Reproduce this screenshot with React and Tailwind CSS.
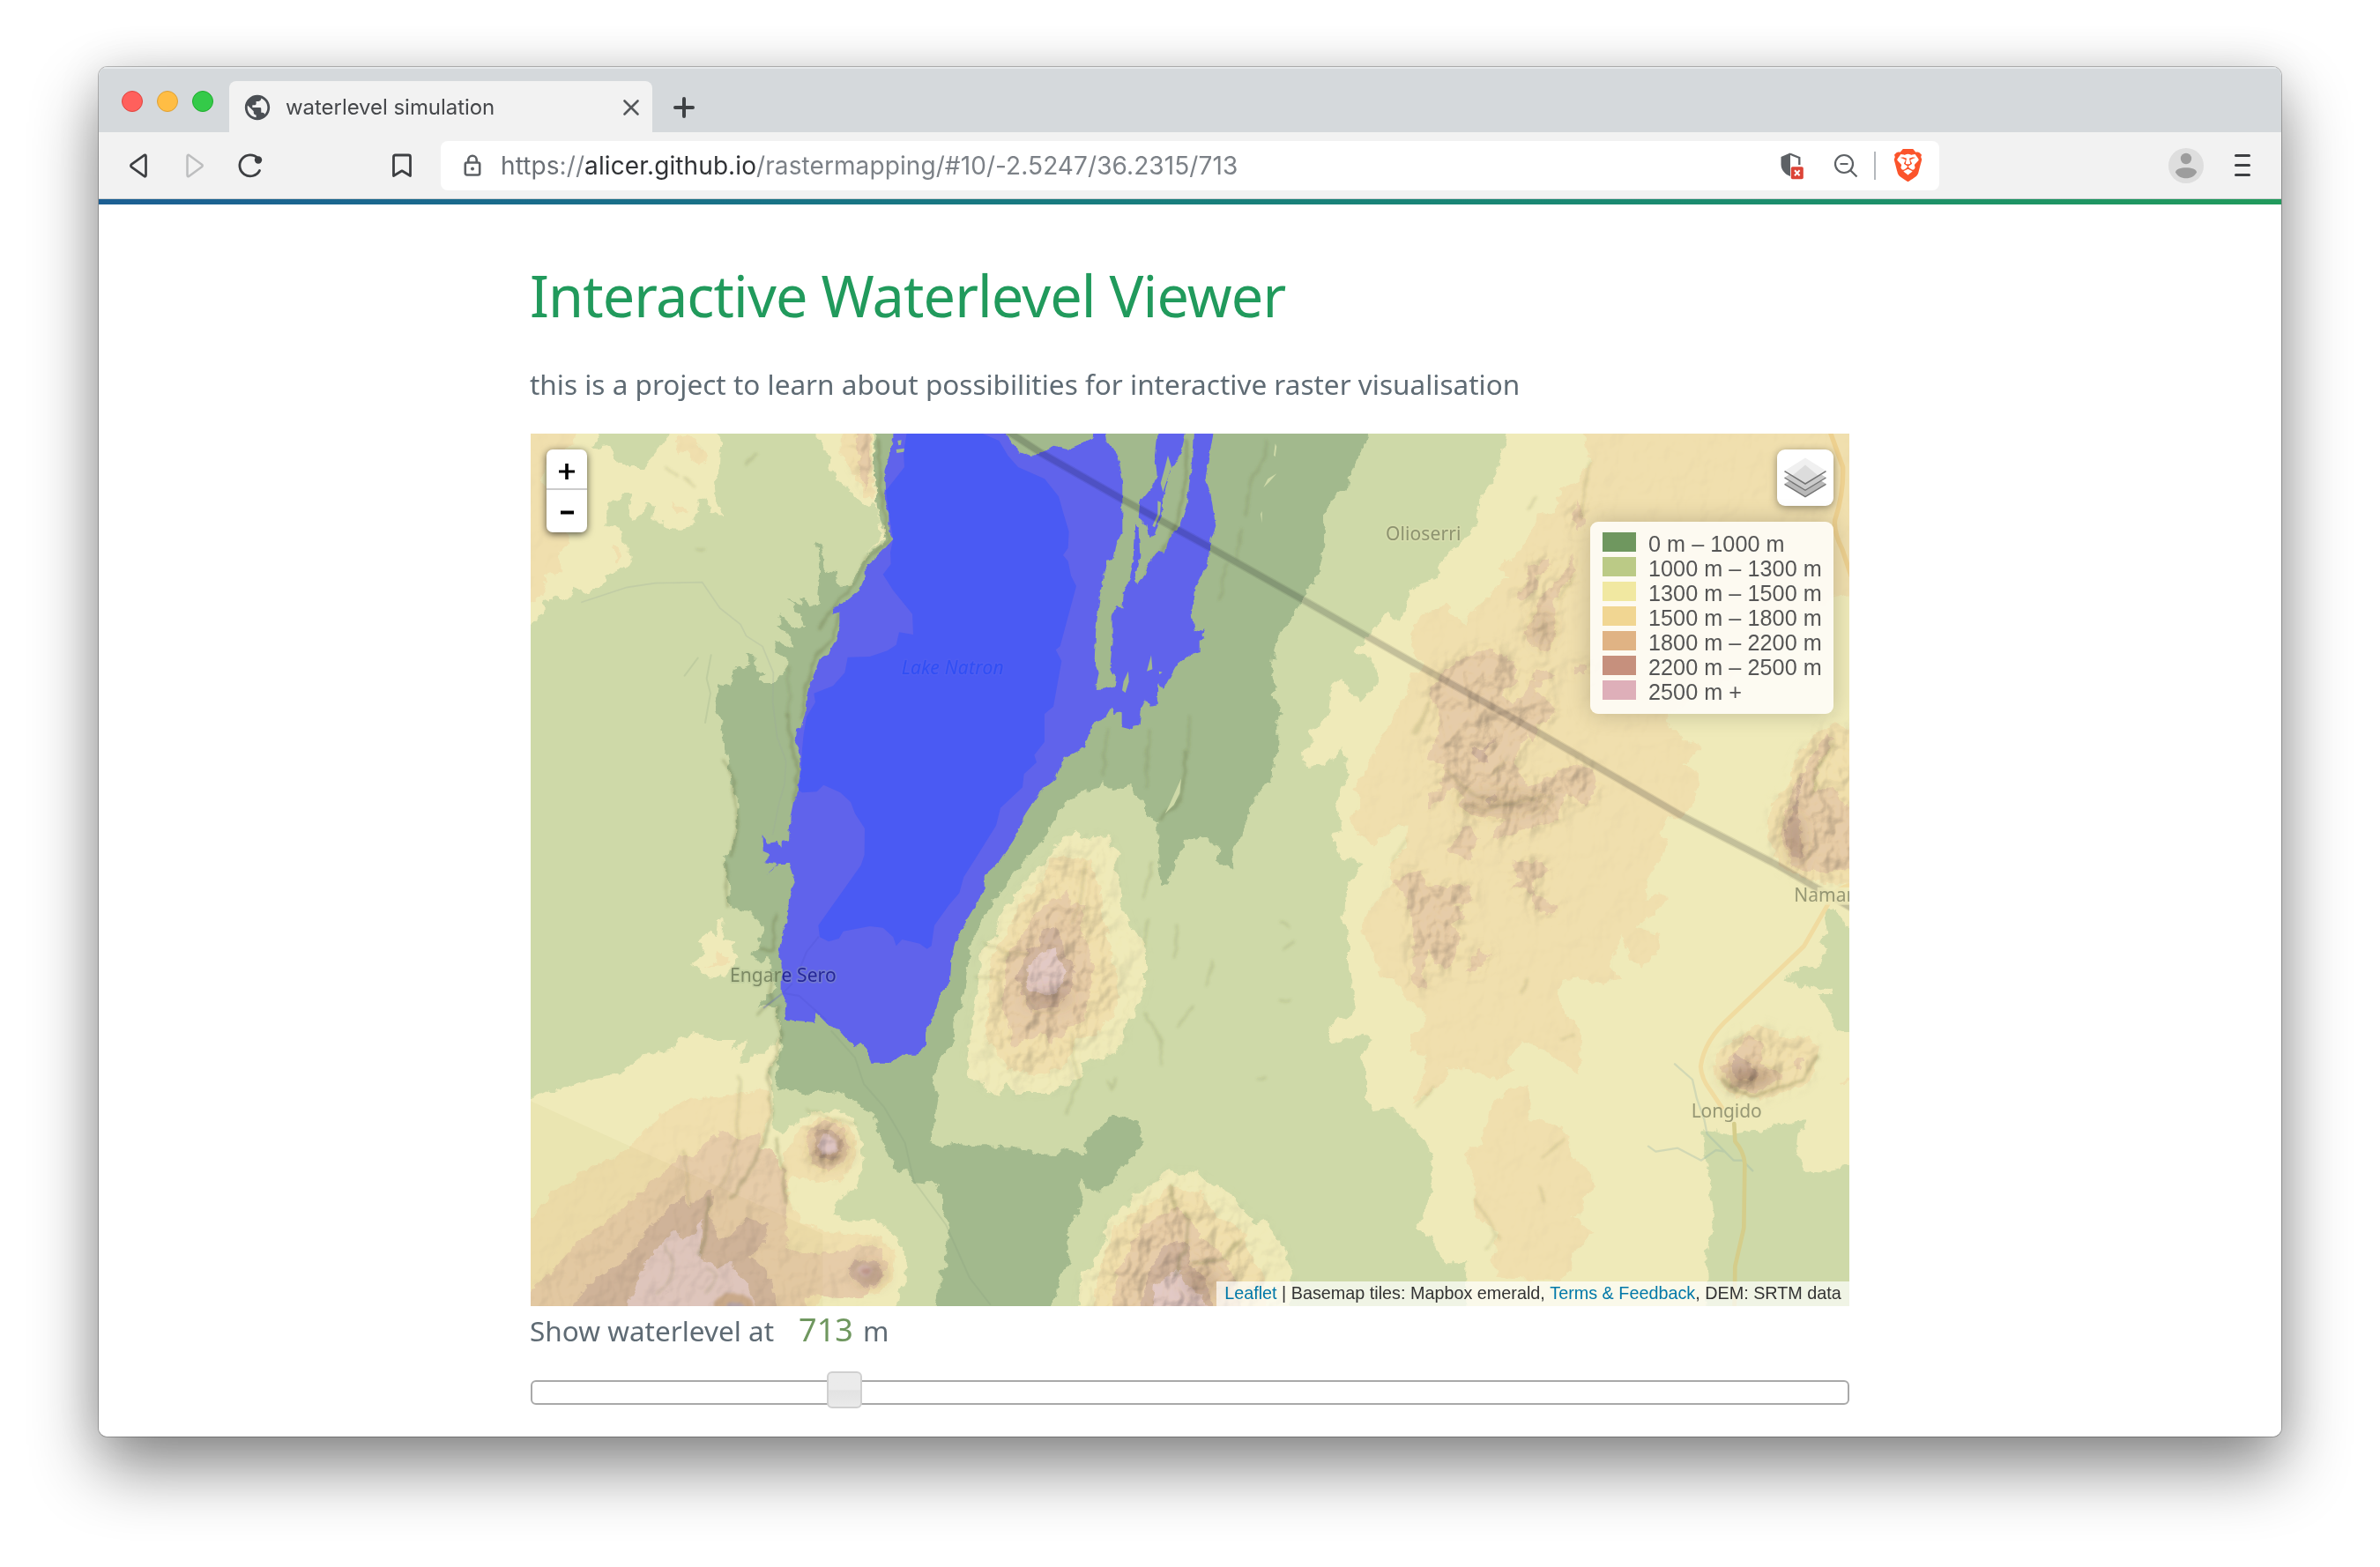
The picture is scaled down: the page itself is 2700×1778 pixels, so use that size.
import React from "react";
import { MdPublic } from "react-icons/md";
import { SiBrave } from "react-icons/si";

const DARK_GREEN = [
  "1185,36 1175,100 1180,250 1200,340 1215,400 1160,440 1130,480 1110,530 1085,560 1055,560 1050,510 1010,500 995,420 980,395 990,450 985,540 980,620 960,625 925,585 930,625 885,605 915,650 940,690 910,700 850,645 860,680 840,690 900,740 900,765 840,740 845,785 880,795 880,830 840,885 785,885 800,850 775,845 765,790 735,785 755,815 730,840 705,825 690,855 685,900 650,890 635,940 650,1010 665,1100 680,1150 695,1250 710,1300 705,1400 690,1460 655,1480 680,1540 685,1650 745,1665 790,1690 800,1740 780,1770 760,1810 790,1840 820,1820 830,1870 835,1930 780,1985 840,1990 860,2080 860,2130 845,2190 840,2250 870,2270 960,2280 1050,2275 1100,2300 1180,2370 1210,2470 1250,2540 1290,2550 1310,2580 1380,2590 1410,2620 1410,2690 1430,2720 1420,2870 1400,2880 1400,2950 1375,3040 1760,3040 1800,2960 1810,2900 1838,2860 1832,2750 1870,2690 1880,2630 1870,2600 1890,2575 1898,2610 1945,2608 1980,2590 2030,2520 2060,2500 2090,2440 2085,2390 2050,2370 2010,2355 1970,2370 1960,2390 1900,2430 1893,2490 1860,2480 1820,2470 1800,2490 1740,2488 1680,2468 1600,2466 1560,2455 1500,2455 1440,2448 1412,2472 1370,2440 1390,2300 1375,2230 1400,2160 1450,2090 1450,2040 1480,1950 1500,1800 1520,1740 1570,1640 1600,1600 1680,1495 1750,1420 1820,1290 1870,1265 1940,1240 1950,1215 1970,1250 2050,1235 2060,1265 2100,1300 2100,1340 2140,1360 2140,1500 2142,1530 2165,1575 2190,1540 2200,1490 2230,1430 2285,1400 2350,1450 2345,1490 2370,1512 2395,1510 2390,1460 2420,1420 2460,1300 2490,1240 2525,1220 2545,1100 2545,1020 2565,985 2530,930 2550,905 2525,860 2545,740 2600,650 2630,610 2690,510 2710,400 2705,310 2745,240 2790,220 2800,160 2850,60 2870,20 1185,20",
];

const YELLOW = [
  "-20,10 240,10 240,45 210,90 270,80 300,135 335,150 390,150 440,90 470,50 485,10 630,10 655,60 650,160 630,200 640,270 655,315 620,300 600,250 570,265 580,300 555,350 510,360 465,355 455,335 420,330 430,280 400,270 390,310 345,335 340,240 320,240 300,265 265,280 265,345 310,350 325,400 345,465 330,495 265,510 260,545 190,575 160,560 140,600 90,590 50,610 50,655 20,670 -20,720",
  "975,10 1010,100 1025,150 1070,210 1110,250 1140,285 1175,270 1190,300 1200,390 1150,440 1200,400 1215,400 1190,320 1180,200 1170,10",
  "-20,2315 50,2280 130,2260 310,2210 390,2155 500,2130 505,2100 560,2075 620,2100 710,2100 690,2135 740,2100 720,2180 760,2150 800,2150 840,2110 855,2080 850,2150 815,2200 830,2300 830,2400 860,2420 920,2370 980,2345 1060,2340 1110,2370 1130,2450 1140,2520 1110,2600 1060,2640 1030,2690 1080,2710 1180,2715 1240,2750 1280,2840 1280,2920 1235,3040 -20,3040",
  "555,1840 600,1810 580,1760 620,1730 640,1750 645,1690 665,1690 660,1760 705,1765 690,1810 710,1825 670,1890 610,1885",
  "1755,1500 1790,1440 1870,1390 1880,1410 1970,1405 1980,1450 2010,1460 1995,1500 2015,1580 2020,1650 2050,1720 2085,1750 2100,1810 2100,1900 2080,1980 2020,2060 2020,2120 1970,2155 1880,2180 1875,2230 1770,2280 1660,2280 1630,2250 1600,2285 1555,2270 1550,2240 1500,2230 1488,2170 1510,2060 1530,1900 1540,1790 1590,1740 1600,1690 1660,1600 1740,1510",
  "1870,3040 1880,2900 1920,2870 1960,2780 1970,2720 2040,2660 2060,2620 2120,2600 2185,2540 2200,2560 2260,2550 2340,2600 2400,2630 2420,2670 2480,2730 2510,2715 2540,2770 2570,2810 2590,2880 2600,2950 2580,3040",
  "3330,10 3315,90 3290,180 3235,260 3225,340 3190,390 3110,460 3090,520 3010,570 2990,565 2995,610 2980,640 2960,680 2920,650 2860,720 2810,780 2870,800 2890,860 2870,910 2830,950 2790,910 2770,870 2730,900 2720,1000 2660,1050 2660,1100 2630,1120 2640,1170 2710,1165 2770,1100 2775,1170 2790,1190 2750,1280 2770,1390 2730,1400 2760,1480 2840,1500 2780,1570 2770,1700 2790,1750 2790,1860 2810,1930 2810,2010 2750,2030 2725,2060 2730,2110 2780,2100 2840,2080 2870,2100 2830,2160 2850,2220 2850,2300 2880,2340 2940,2330 2990,2380 3000,2400 3050,2440 3080,2530 3065,2640 3050,2700 3020,2740 3070,2770 3100,2830 3120,2860 3190,2860 3190,3040 4000,3040 4010,2900 4005,2820 4035,2700 4020,2600 4000,2500 4000,2400 4070,2420 4200,2410 4260,2385 4350,2380 4320,2420 4310,2480 4345,2550 4430,2540 4520,2520 4520,2078 4450,2070 4430,2010 4390,1950 4440,1950 4440,1925 4400,1925 4370,1910 4330,1920 4275,1890 4330,1850 4390,1855 4420,1790 4390,1765 4420,1740 4410,1650 4440,1650 4520,1750 4520,10",
];

const TAN = [
  "-20,10 185,10 130,80 60,130 40,200 100,300 140,400 100,440 115,510 60,520 40,590 -20,610",
  "500,50 540,40 600,90 610,130 570,140 530,90 505,100",
  "285,420 305,420 315,460 300,480",
  "480,270 510,280 545,300 500,310",
  "1062,10 1060,110 1100,170 1150,250 1172,260 1165,10",
  "-20,2730 80,2620 200,2540 330,2480 400,2400 500,2320 550,2300 700,2290 760,2270 815,2270 820,2340 800,2420 790,2490 830,2480 860,2540 870,2490 900,2440 930,2390 980,2365 1060,2370 1110,2430 1110,2520 1060,2580 960,2580 900,2560 880,2590 890,2660 930,2720 1010,2750 1100,2760 1200,2770 1250,2830 1240,2910 1190,2960 1040,2970 1000,2960 950,3040 -20,3040",
  "1780,1480 1740,1560 1670,1640 1610,1760 1570,1830 1565,1980 1550,2090 1600,2150 1630,2200 1740,2215 1800,2200 1850,2150 1860,2090 1930,2080 1980,2020 2010,1960 2000,1880 1980,1790 1960,1700 1950,1600 1910,1480",
  "1910,3040 1940,2900 1990,2740 2060,2680 2140,2640 2180,2590 2220,2610 2290,2620 2340,2700 2430,2740 2450,2820 2500,2900 2520,3040",
  "3575,10 3615,130 3580,170 3570,210 3510,220 3490,310 3430,310 3410,370 3370,440 3300,490 3330,520 3270,590 3200,640 3190,690 3120,620 3040,650 3000,720 3010,780 3050,830 3000,860 2990,900 2960,960 2930,1020 2880,1100 2850,1180 2810,1240 2830,1290 2790,1350 2830,1400 2870,1440 2960,1370 2990,1370 2980,1450 2930,1500 2940,1560 2860,1650 2830,1730 2870,1790 2900,1890 2950,1890 2990,1960 3040,2000 3050,2060 3000,2080 3000,2140 3060,2150 3040,2230 3010,2320 3090,2260 3135,2220 3120,2200 3200,2200 3290,2240 3350,2200 3330,2170 3380,2100 3460,2140 3575,2215 3580,2060 3520,2000 3500,1930 3550,1880 3650,1910 3715,1890 3680,1850 3700,1800 3720,1740 3750,1830 3790,1850 3850,1790 3840,1740 3770,1710 3830,1670 3870,1620 3850,1600 3800,1620 3810,1560 3840,1500 3880,1440 3850,1400 3880,1340 3920,1350 3970,1280 3980,1200 3930,1160 3990,1100 3940,1080 3900,1040 3870,1020 3900,980 4200,800 4440,590 4520,585 4520,10",
  "3290,2310 3340,2260 3400,2260 3410,2320 3400,2370 3480,2380 3540,2420 3550,2500 3620,2550 3630,2600 3580,2640 3590,2690 3550,2700 3620,2760 3590,2800 3550,2830 3550,2880 3500,2920 3300,2910 3280,2850 3300,2750 3220,2700 3215,2580 3190,2470 3240,2460 3260,2380",
  "4520,1050 4440,1020 4380,1060 4320,1130 4280,1230 4230,1300 4215,1400 4250,1500 4330,1550 4400,1565 4520,1570",
  "4030,2200 4050,2140 4120,2080 4180,2050 4250,2070 4290,2100 4350,2090 4390,2120 4380,2200 4340,2250 4200,2300 4100,2290 4040,2230",
  "4460,2250 4520,2200 4520,2220 4480,2250",
  "640,1790 655,1800 680,1840 660,1850 590,1850 640,1835",
];

const SALMON = [
  "1108,10 1115,90 1130,170 1150,230 1160,180 1155,10",
  "-20,2985 100,2860 160,2790 280,2710 400,2600 480,2540 520,2490 550,2500 600,2450 650,2410 720,2440 780,2420 790,2470 830,2480 870,2550 880,2650 880,2810 960,2830 1080,2820 1120,2800 1180,2800 1220,2860 1200,2920 1130,2980 950,2970 950,3040 -20,3040",
  "940,2455 960,2400 1010,2375 1070,2400 1095,2460 1070,2520 1020,2550 970,2520",
  "1830,1590 1800,1620 1740,1650 1650,1780 1620,1820 1615,2000 1640,2070 1650,2130 1690,2100 1740,2080 1780,2110 1830,2060 1890,2040 1900,1970 1920,1900 1910,1800 1880,1720 1890,1640 1870,1630 1850,1640",
  "1980,3040 2000,2900 2050,2800 2090,2730 2200,2670 2240,2700 2290,2770 2350,2820 2390,2870 2400,2920 2430,3040",
  "3270,770 3350,810 3360,870 3310,930 3350,960 3400,900 3430,840 3500,850 3420,910 3490,960 3490,990 3430,1030 3420,1080 3400,1060 3350,1150 3400,1240 3480,1200 3550,1160 3620,1180 3630,1240 3600,1310 3530,1260 3500,1360 3420,1370 3300,1420 3280,1390 3330,1350 3220,1340 3160,1300 3180,1270 3150,1240 3060,1310 3060,1260 3100,1250 3120,1160 3050,1140 3090,1080 3100,980 3060,920 3100,860 3180,800",
  "3400,490 3470,460 3480,490 3430,520 3430,570 3380,610 3360,590 3400,540",
  "3560,450 3560,510 3490,600 3490,700 3470,780 3400,750 3390,710 3430,640 3440,590 3500,540",
  "3570,260 3595,330 3570,370 3550,320",
  "3190,1370 3230,1420 3200,1480 3130,1460",
  "3000,1530 3030,1520 3060,1580 3200,1570 3210,1630 3150,1640 3190,1680 3140,1700 3170,1750 3150,1830 3110,1870 3060,1790 3040,1860 3050,1930 3010,1910 3010,1700 2980,1600 2940,1560",
  "3230,1790 3270,1810 3240,1850 3190,1870",
  "3350,1490 3430,1490 3470,1520 3420,1560 3430,1610 3500,1650 3480,1670 3420,1660 3420,1600 3340,1580 3380,1550 3350,1530",
  "3560,830 3600,820 3600,855 3560,855",
  "4420,1050 4440,1080 4400,1140 4370,1250 4430,1240 4480,1300 4520,1330 4520,1510 4400,1530 4300,1510 4260,1400 4280,1300 4340,1170",
  "4050,2190 4100,2150 4150,2080 4190,2100 4200,2180 4270,2230 4180,2280 4100,2260",
  "4310,2160 4335,2160 4330,2200 4305,2200",
];

const BROWN = [
  "120,3040 200,2930 300,2870 380,2790 400,2740 440,2720 460,2680 530,2630 550,2680 570,2640 630,2610 620,2700 650,2790 740,2710 810,2730 800,2790 750,2830 790,2870 830,2930 855,3040",
  "970,2450 985,2410 1030,2400 1060,2430 1070,2460 1050,2500 1015,2510 980,2490",
  "1085,2880 1110,2850 1160,2855 1185,2850 1210,2890 1190,2920 1150,2945 1105,2920",
  "1750,1720 1780,1710 1810,1740 1820,1810 1860,1860 1850,1930 1790,1985 1710,2000 1680,1950 1660,1880 1690,1840 1700,1790 1740,1770",
  "2070,3040 2120,2870 2160,2800 2240,2780 2245,2860 2300,2910 2340,3040",
  "4340,1180 4320,1280 4330,1400 4340,1480 4300,1480 4270,1400 4300,1330",
  "4090,2190 4110,2150 4160,2180 4180,2220 4160,2245 4100,2220",
  "3205,1110 3240,1110 3290,1070 3250,1120 3270,1150 3230,1160",
  "3250,1290 3290,1265 3300,1280 3270,1300",
];

const PINK = [
  "320,3040 370,2920 400,2860 440,2810 500,2745 520,2780 560,2760 595,2710 580,2830 600,2860 650,2875 690,2850 700,2880 740,2920 785,3040",
  "990,2435 1010,2422 1040,2450 1052,2475 1030,2492 1000,2485 985,2460",
  "1700,1850 1740,1800 1790,1795 1830,1870 1810,1920 1780,1950 1740,1945 1700,1930 1690,1890",
  "2120,3040 2130,2930 2210,2880 2230,2930 2290,2970 2320,3040",
];

const WATER = [
  "1240,10 1240,50 1230,100 1210,160 1215,220 1210,260 1225,310 1225,370 1240,395 1200,440 1145,490 1145,520 1125,570 1075,610 1035,630 1035,650 1060,640 1060,680 1045,740 1020,785 990,800 965,870 945,930 940,990 925,1035 910,1040 905,1085 920,1110 925,1170 915,1250 900,1290 890,1340 885,1420 860,1425 860,1445 845,1425 815,1430 797,1405 797,1460 820,1470 800,1495 845,1500 830,1520 805,1540 850,1500 885,1500 905,1560 885,1620 880,1700 865,1730 850,1800 860,1850 860,1940 875,1970 870,2030 970,2040 980,2010 1025,2055 1060,2070 1110,2125 1130,2110 1150,2130 1165,2180 1225,2180 1270,2150 1320,2150 1350,2120 1350,2075 1385,2000 1400,1940 1430,1910 1435,1830 1450,1770 1500,1675 1550,1590 1550,1540 1600,1495 1650,1420 1690,1330 1740,1255 1790,1215 1820,1140 1890,1105 1920,1020 1960,1005 1983,965 1990,990 2018,985 2018,1035 2055,1045 2078,1025 2085,970 2100,940 2115,965 2138,960 2140,890 2160,905 2200,830 2250,790 2285,780 2285,740 2305,735 2290,720 2300,700 2265,715 2255,650 2265,570 2310,480 2320,400 2338,350 2320,240 2303,190 2315,110 2335,10 2263,10 2255,150 2240,270 2215,350 2180,390 2165,440 2140,435 2110,480 2090,530 2070,550 2060,535 2080,450 2075,365 2062,340 2055,480 2045,530 2025,570 2020,635 2000,620 1985,660 1985,740 1978,840 1998,860 1995,895 1955,905 1928,905 1940,850 1925,810 1930,700 1945,580 1965,470 1990,465 2000,410 2020,370 2020,190 2005,110 1965,60 1958,10 1925,10 1922,50 1900,60 1830,90 1790,80 1710,115 1670,100 1600,10",
  "2140,10 2240,10 2220,100 2185,160 2160,250 2155,310 2130,380 2110,390 2100,345 2075,320 2080,270 2120,220 2138,180 2130,110",
];

const ISLANDS = [
  "2175,110 2187,150 2158,235 2150,205 2165,150",
  "2140,265 2151,270 2148,310 2130,355 2122,350 2140,310",
  "2040,845 2042,880 2030,918 2019,910 2024,880",
  "2118,790 2122,838 2103,845",
  "2144,845 2156,848 2146,856",
  "1255,60 1268,58 1266,74 1258,76",
  "1250,90 1278,86 1276,98 1252,102",
];

const LAKE = [
  "1290,10 1275,100 1278,150 1215,230 1225,310 1240,395 1230,440 1232,480 1205,515 1240,570 1305,650 1308,720 1260,712 1250,755 1220,775 1160,795 1085,797 1075,850 1035,895 970,920 975,950 945,1000 935,1060 930,1110 927,1170 918,1250 930,1258 980,1255 1003,1232 1060,1258 1095,1290 1110,1330 1143,1380 1142,1470 1130,1505 985,1710 990,1750 1020,1765 1055,1755 1070,1730 1160,1713 1205,1718 1240,1750 1250,1780 1270,1758 1330,1772 1355,1790 1370,1780 1380,1710 1430,1640 1465,1600 1480,1545 1515,1490 1590,1370 1605,1310 1680,1240 1685,1195 1728,1155 1720,1130 1755,1085 1755,990 1785,965 1813,810 1793,772 1808,760 1863,555 1845,520 1835,470 1818,450 1835,425 1838,370 1820,310 1803,250 1755,190 1665,150 1630,110 1600,60 1530,30 1530,10",
];

const RIDGES = [
  "M1190 60 L1195 200 L1215 330 L1225 400 L1150 460 L1115 540 L1040 620 L990 700",
  "M1055 650 L1035 730 L980 800 L945 890 L925 1000",
  "M885 1000 L890 1080 L915 1180 L905 1290",
  "M665 1150 L690 1200 L705 1300 L710 1380 L690 1470",
  "M670 1500 L680 1640 M835 1680 L830 1790 L790 1790",
  "M2240 60 L2232 220 L2205 340 L2180 400 L2150 440 L2080 550 L2050 590",
  "M2235 1120 L2230 1220 L2205 1300 L2150 1350",
  "M820 1900 L825 1960 L780 2010 M845 1990 L855 2080 L845 2150 L812 2200 L825 2350 L800 2450 L760 2530 L690 2640",
  "M840 2440 L870 2550 L870 2650 M610 2640 L600 2780 L580 2830",
  "M2240 2690 L2240 2800 L2200 2900 M2185 2590 L2200 2680 M2260 2860 L2350 2850 L2420 2780",
  "M4440 1100 L4380 1180 L4370 1260 M4060 2240 L4160 2290 L4330 2240 L4385 2160",
];

const FAINT_RIDGES = [
  "M2505 60 L2505 120 L2455 200 L2440 320 M2420 360 L2410 460 M2380 480 L2350 600",
  "M2248 1000 L2245 1120 M1970 1040 L1955 1200 M2110 1050 L2100 1240 M1885 850 L1888 1000",
  "M715 2220 L715 2330 L700 2480 L650 2600 M530 2480 L545 2670 M885 830 L885 1000",
  "M2120 1500 L2090 1620 M2105 1690 L2095 1780 M1895 1500 L1880 1630 L1850 1700 M1850 2080 L1850 2170 L1875 2230 L1830 2350",
  "M2100 2010 L2155 2110 L2150 2180 M2325 1830 L2310 1920 M2260 1980 L2210 2060 M2205 1710 L2200 1820",
  "M3610 130 L3590 250 L3580 320 M3430 260 L3400 290 M3560 520 L3500 600 M3060 980 L3020 1060",
  "M3120 1180 L3180 1240 L3250 1280 L3330 1290 M3180 1300 L3260 1320 L3360 1290 L3480 1270",
  "M3500 1270 L3420 1340 M2990 1420 L2940 1490 M3060 960 L3010 1060 M3280 1200 L3330 1130",
  "M3400 1890 L3380 1940 M3560 2080 L3510 2095 M3520 2440 L3450 2500 M3080 2260 L3020 2330",
  "M3220 2640 L3270 2720 L3300 2780 M3440 2600 L3455 2650 M3290 2760 L3260 2810",
  "M1550 1770 L1620 1800 L1700 1810 M1520 1880 L1600 1890 M1690 1850 L1680 1930 L1720 1990",
  "M950 2340 L1110 2390 M610 2880 Q660 2900 600 2960 M470 2800 Q520 2900 440 2960",
  "M470 150 L500 180 M530 190 L560 210 M780 100 L740 140 M580 430 L600 425 M1970 2240 L1985 2265 L2000 2235",
  "M2480 2230 L2500 2225 M2590 1960 L2560 1965 M2560 1700 L2590 1715 M2600 1760 L2570 1785",
];

function Polys({ shapes, fill, filter }) {
  return (
    <g fill={fill} filter={filter}>
      {shapes.map((points, i) => (
        <polygon key={i} points={points} />
      ))}
    </g>
  );
}

function PlaceName({ x, y, width, children, fill = "#5d6247", opacity = 0.6, halo = "#ece9b8", italic }) {
  return (
    <text
      x={x}
      y={y}
      textLength={width}
      fontFamily='"Noto Sans", "Open Sans", sans-serif'
      fontSize="63"
      fontStyle={italic ? "italic" : "normal"}
      fill={fill}
      fillOpacity={opacity}
      stroke={halo}
      strokeOpacity="0.25"
      strokeWidth="10"
      strokeLinejoin="round"
      paintOrder="stroke"
    >
      {children}
    </text>
  );
}

function TerrainMap() {
  return (
    <svg viewBox="6 36 4488 2970" className="block h-full w-full" aria-label="Elevation map">
      <defs>
        <filter id="rough" filterUnits="userSpaceOnUse" x="-30" y="0" width="4560" height="3050">
          <feTurbulence type="fractalNoise" baseFrequency="0.03" numOctaves="3" seed="4" />
          <feDisplacementMap in="SourceGraphic" scale="34" xChannelSelector="R" yChannelSelector="G" />
        </filter>
        <filter id="shore" filterUnits="userSpaceOnUse" x="-30" y="0" width="4560" height="3050">
          <feTurbulence type="fractalNoise" baseFrequency="0.04" numOctaves="2" seed="9" />
          <feDisplacementMap in="SourceGraphic" scale="16" xChannelSelector="R" yChannelSelector="G" />
        </filter>
        <filter id="soft" filterUnits="userSpaceOnUse" x="-30" y="0" width="4560" height="3050">
          <feTurbulence type="fractalNoise" baseFrequency="0.02" numOctaves="2" seed="7" result="noise" />
          <feDisplacementMap in="SourceGraphic" in2="noise" scale="26" xChannelSelector="R" yChannelSelector="G" />
          <feGaussianBlur stdDeviation="4" />
        </filter>
        <filter id="softWide" filterUnits="userSpaceOnUse" x="-30" y="0" width="4560" height="3050">
          <feGaussianBlur stdDeviation="22" />
        </filter>
        <filter id="relief" filterUnits="userSpaceOnUse" x="-30" y="0" width="4560" height="3050" colorInterpolationFilters="sRGB">
          <feTurbulence type="fractalNoise" baseFrequency="0.012 0.01" numOctaves="3" seed="12" />
          <feColorMatrix type="matrix" values="0 0 0 0 0  0 0 0 0 0  0 0 0 0 0  1 0 0 0 0" />
          <feDiffuseLighting surfaceScale="34" diffuseConstant="1.24" lightingColor="#fff6dc">
            <feDistantLight azimuth="225" elevation="55" />
          </feDiffuseLighting>
        </filter>
        <mask id="hills" maskUnits="userSpaceOnUse" x="0" y="0" width="4540" height="3040">
          <g filter="url(#softWide)">
            <Polys shapes={TAN} fill="#101010" />
            <Polys shapes={YELLOW.slice(4, 6)} fill="#303030" />
            <Polys shapes={[TAN[10], TAN[11], TAN[6], TAN[7]]} fill="#686868" />
            <Polys shapes={SALMON} fill="#a0a0a0" />
            <Polys shapes={[SALMON[1]]} fill="#303030" />
          </g>
        </mask>
      </defs>

      <rect x="6" y="36" width="4488" height="2970" fill="#ced9a8" />
      <Polys shapes={DARK_GREEN} fill="#a2b98d" filter="url(#rough)" />
      <Polys shapes={YELLOW} fill="#efeab9" filter="url(#rough)" />
      <Polys shapes={TAN} fill="#f0dfae" filter="url(#rough)" />
      <Polys shapes={SALMON} fill="#e6cca9" filter="url(#rough)" />
      <Polys shapes={BROWN} fill="#d2b6a0" filter="url(#rough)" />
      <Polys shapes={PINK} fill="#e2c9c5" filter="url(#rough)" />
      <ellipse cx="695" cy="3000" rx="68" ry="38" fill="#ccab90" filter="url(#soft)" />
      <ellipse cx="705" cy="3006" rx="34" ry="15" fill="#b6a5ad" filter="url(#soft)" />
      <ellipse cx="1146" cy="2888" rx="24" ry="14" fill="#cda59b" stroke="#dcc0bc" strokeWidth="8" filter="url(#soft)" />
      <polygon points="6,2308 1000,2760 1000,3006 6,3006" fill="#9a8a30" fillOpacity="0.05" />
      <g filter="url(#softWide)" fill="#6d5030">
        <ellipse cx="1025" cy="2475" rx="62" ry="50" fillOpacity="0.28" />
        <ellipse cx="1165" cy="2900" rx="50" ry="35" fillOpacity="0.25" />
        <ellipse cx="1770" cy="1960" rx="80" ry="30" fillOpacity="0.2" />
        <ellipse cx="2290" cy="2930" rx="60" ry="50" fillOpacity="0.2" />
        <ellipse cx="4150" cy="2230" rx="90" ry="30" fillOpacity="0.35" />
        <ellipse cx="4310" cy="1420" rx="30" ry="90" fillOpacity="0.25" />
        <ellipse cx="3300" cy="1290" rx="150" ry="40" fillOpacity="0.12" />
        <ellipse cx="3450" cy="700" rx="40" ry="60" fillOpacity="0.12" />
      </g>
      <ellipse cx="1018" cy="2455" rx="30" ry="30" fill="#ddc4c4" filter="url(#soft)" />

      <g mask="url(#hills)" className="mix-blend-multiply" opacity="0.38">
        <rect x="6" y="36" width="4488" height="2970" filter="url(#relief)" />
      </g>

      <g fill="none" stroke="#5b6433" strokeOpacity="0.26" strokeWidth="12" strokeLinecap="round" strokeLinejoin="round" filter="url(#soft)">
        {RIDGES.map((d) => (
          <path key={d} d={d} />
        ))}
      </g>
      <g fill="none" stroke="#5b6433" strokeOpacity="0.16" strokeWidth="9" strokeLinecap="round" strokeLinejoin="round" filter="url(#soft)">
        {FAINT_RIDGES.map((d) => (
          <path key={d} d={d} />
        ))}
      </g>

      <Polys shapes={["2180,1300 2220,1210 2215,1260 2195,1300 2165,1330", "2500,220 2515,190 2545,172 2520,200", "2535,110 2540,70 2545,80 2540,115", "2490,310 2495,300 2495,340"]} fill="#ced9a8" />

      <Polys shapes={WATER} fill="#6064eb" filter="url(#shore)" />
      <Polys shapes={LAKE} fill="#4a5af3" />
      <Polys shapes={ISLANDS} fill="#a2b98d" />

      <g fill="none" strokeLinecap="round" strokeLinejoin="round">
        <path d="M180 610 L330 560 L430 545 L590 542 L650 630 L720 685 L740 725 L795 760 L832 850 L830 950 L845 1070 L875 1150 L870 1230 L850 1300 L830 1400" stroke="#9aa9a0" strokeOpacity="0.24" strokeWidth="5" />
        <path d="M620 790 L605 870 L618 920 L600 1020 M530 860 L575 800 M1030 2070 L1110 2160 L1140 2250 L1210 2330 L1280 2450 L1310 2580 L1420 2730 L1500 2910 L1570 3000" stroke="#7f9478" strokeOpacity="0.18" strokeWidth="6" />
        <path d="M985 1750 L945 1800 L925 1850 M895 1910 L865 1940 L800 1990 M865 1940 L920 1950 L1010 2030" stroke="#4a50d0" strokeOpacity="0.25" strokeWidth="6" />
        <path d="M3900 2182 L3960 2235 L3975 2300 L4000 2370 L4010 2420 L4100 2510 L4130 2510 L4165 2545 M3810 2462 L3835 2480 L3910 2468 L3990 2510 L4040 2475 L4070 2480" stroke="#8fb0a8" strokeOpacity="0.3" strokeWidth="7" />
        <path d="M4425 20 Q4450 90 4472 150 Q4475 240 4445 330 Q4440 370 4470 430 L4500 520" stroke="#edd08f" strokeWidth="16" />
        <path d="M4520 1570 Q4440 1575 4420 1640 L4340 1780 L4090 2020 Q4000 2100 3988 2190 Q3990 2230 4020 2270 L4060 2330" stroke="#f0dba0" strokeWidth="15" />
        <path d="M4102 2385 L4105 2445 Q4135 2480 4138 2520 L4135 2740 L4105 2870 L4103 3010" stroke="#d5cd8a" strokeWidth="14" />
        <path d="M1610 15 L1740 100 L2020 260 L2330 430 L2640 605 L3000 810 L3430 1050 L3920 1335 L4240 1500 L4500 1650" stroke="#00000e" strokeOpacity="0.08" strokeWidth="28" />
        <path d="M1610 15 L1740 100 L2020 260 L2330 430 L2640 605 L3000 810 L3430 1050 L3920 1335 L4240 1500 L4500 1650" stroke="#00000e" strokeOpacity="0.11" strokeWidth="20" />
      </g>

      <PlaceName x={1268} y={854} width={348} fill="#2c4bf5" opacity={0.85} halo="#5a66f0" italic>Lake Natron</PlaceName>
      <PlaceName x={2916} y={398} width={256}>Olioserri</PlaceName>
      <PlaceName x={684} y={1902} width={362} halo="#a2b98d">
        <tspan fill="#4f5c3e">Engar</tspan>
        <tspan fill="#16188c" fillOpacity="0.85">e Sero</tspan>
      </PlaceName>
      <rect x="4385" y="1580" width="109" height="60" fill="#efeab9" fillOpacity="0.8" />
      <PlaceName x={4306} y={1630}>Namanga</PlaceName>
      <PlaceName x={3956} y={2363} width={240}>Longido</PlaceName>
    </svg>
  );
}

function ZoomControl() {
  return (
    <div className="flex h-[94px] w-[46px] flex-col rounded-[7px] bg-white shadow-[0_2px_9px_rgba(0,0,0,0.65)]">
      <button className="flex h-[46px] items-center justify-center border-b-2 border-[#ccc] pt-[6px]">
        <svg viewBox="0 0 18 18" className="h-[18px] w-[18px]" fill="#000">
          <path d="M7.200 0h3.600v7.400H18v3.200h-7.200V18H7.200v-7.400H0V7.400h7.200z" />
        </svg>
      </button>
      <button className="flex h-[48px] items-center justify-center pt-[2px]">
        <svg viewBox="0 0 15 5" className="h-[5px] w-[15px]" fill="#000">
          <path d="M0 .5h15v4H0z" />
        </svg>
      </button>
    </div>
  );
}

function LayersControl() {
  return (
    <div className="flex h-16 w-16 items-center justify-center rounded-[9px] bg-white shadow-[0_2px_10px_rgba(0,0,0,0.4)]">
      <svg viewBox="0 0 48 46" className="h-[46px] w-[48px]">
        <path d="M.5 30 24 15l23.500 15L24 44.500z" fill="#b9b9b9" />
        <path d="M.5 30.300 24 44.700l23.500-14.400" fill="none" stroke="#747474" strokeWidth="1.400" />
        <path d="M.5 22.800 24 8l23.500 14.800L24 37.300z" fill="#cbcbcb" />
        <path d="M.5 23 24 37.300 47.500 23" fill="none" stroke="#747474" strokeWidth="1.400" />
        <path d="M.5 15.300 24 .5l23.500 14.800L24 30z" fill="#f0f0f0" />
        <path d="M9.500 20.600 24 8.500l14.500 12.100L24 29.500z" fill="#dcdcdc" />
        <path d="M.5 15.600 24 30l23.500-14.400" fill="none" stroke="#747474" strokeWidth="1.500" />
      </svg>
    </div>
  );
}

const LEGEND = [
  ["bg-[#6f975f]", "0 m – 1000 m"],
  ["bg-[#bbca86]", "1000 m – 1300 m"],
  ["bg-[#f1e8a1]", "1300 m – 1500 m"],
  ["bg-[#f1d692]", "1500 m – 1800 m"],
  ["bg-[#e0b384]", "1800 m – 2200 m"],
  ["bg-[#c6907d]", "2200 m – 2500 m"],
  ["bg-[#deafb9]", "2500 m +"],
];

function Legend() {
  return (
    <div className="h-[218px] w-[276px] rounded-[9px] bg-[#fffefb]/87 px-[14px] pt-3 shadow-[0_0_27px_rgba(0,0,0,0.2)]">
      {LEGEND.map(([color, label]) => (
        <div key={label} className="flex h-7 items-start">
          <span className={`h-[22px] w-[38px] shrink-0 ${color}`} />
          <span className="ml-[14px] whitespace-nowrap font-['Liberation_Sans',Arial,sans-serif] text-[25.2px] leading-[27px] tracking-[0.05px] text-[#555]">
            {label}
          </span>
        </div>
      ))}
    </div>
  );
}

function TabStrip() {
  return (
    <div className="flex h-[74px] shrink-0 items-end bg-[#d5d9dc] shadow-[inset_0_2px_0_#e6e9eb]">
      <div className="flex h-[74px] w-[148px] items-center gap-4 pl-[26px] pt-[4px]">
        <span className="h-6 w-6 rounded-full border border-[#e0443e] bg-[#ff605c]" />
        <span className="h-6 w-6 rounded-full border border-[#dea034] bg-[#ffbd44]" />
        <span className="h-6 w-6 rounded-full border border-[#1dad2b] bg-[#34ca49]" />
      </div>
      <div className="flex h-[58px] w-[480px] items-center rounded-t-[8px] bg-[#f2f2f2] pl-[15px] pr-[14px] pt-[2px]">
        <MdPublic className="h-[34px] w-[34px] text-[#4b4f54]" />
        <span className="ml-[15px] whitespace-nowrap font-['Inter',sans-serif] text-[24px] tracking-[-0.05px] text-[#45474a]">waterlevel simulation</span>
        <svg viewBox="0 0 20 20" className="ml-auto h-5 w-5" fill="none" stroke="#55585b" strokeWidth="2.600" strokeLinecap="round">
          <path d="M2.500 2.500l15 15M17.500 2.500l-15 15" />
        </svg>
      </div>
      <div className="flex h-[58px] w-[72px] items-center justify-center pt-[2px]">
        <svg viewBox="0 0 24 24" className="h-6 w-6" fill="none" stroke="#3f4245" strokeWidth="4" strokeLinecap="round">
          <path d="M12 2v20M2 12h20" />
        </svg>
      </div>
    </div>
  );
}

function Toolbar() {
  return (
    <div className="flex h-[76px] shrink-0 items-center border-b border-[#cfd1d2] bg-[#f2f2f2] pl-[34px]">
      <svg viewBox="0 0 22 28" className="h-7 w-[22px]" fill="none" stroke="#3d3f42" strokeWidth="2.700" strokeLinejoin="round">
        <path d="M19.500 3.200v21.600c0 1.600-1.300 1.900-2.200.9L3 15.300c-.8-.8-.8-1.800 0-2.600L17.300 2.300c.9-.9 2.200-.6 2.200.9z" />
      </svg>
      <svg viewBox="0 0 22 28" className="ml-[42px] h-7 w-[22px]" fill="none" stroke="#bdbebf" strokeWidth="2.500" strokeLinejoin="round">
        <path d="M2.500 3.200v21.600c0 1.600 1.300 1.900 2.200.9L19 15.300c.8-.8.8-1.800 0-2.600L4.700 2.300c-.9-.9-2.200-.6-2.200.9z" />
      </svg>
      <svg viewBox="0 0 30 30" className="ml-[37px] h-[30px] w-[30px]" fill="none" stroke="#3d3f42" strokeWidth="2.800" strokeLinecap="round">
        <path d="M25.500 20.500A12 12 0 1 1 23.500 6.500" />
        <circle cx="24" cy="8.500" r="4.200" fill="#3d3f42" stroke="none" />
      </svg>
      <svg viewBox="0 0 24 30" className="ml-[145px] h-[30px] w-6" fill="none" stroke="#3d3f42" strokeWidth="2.800" strokeLinejoin="round">
        <path d="M4.500 3h15q2 0 2 2v21.500L12 20.800 2.500 26.500V5q0-2 2-2z" />
      </svg>
      <div className="ml-[32px] flex h-[56px] w-[1700px] items-center rounded-[8px] bg-white pl-[24px]">
        <svg viewBox="0 0 24 28" className="h-7 w-6" fill="none" stroke="#5d6165" strokeWidth="2.600">
          <rect x="3.800" y="10.500" width="16.400" height="14" rx="2" />
          <path d="M7.300 10.500V7.500a4.700 4.700 0 0 1 9.400 0v3" />
          <circle cx="12" cy="17.500" r="2" fill="#5d6165" stroke="none" />
        </svg>
        <span className="ml-[20px] whitespace-nowrap font-['Inter',sans-serif] text-[28px] tracking-[0.09px] text-[#7c8187]">
          <span className="text-[#6a6f75]">https</span>://<span className="text-[#303235]">alicer.github.io</span>/rastermapping/#10/-2.5247/36.2315/713
        </span>
        <div className="ml-auto flex items-center pr-[17px]">
          <svg viewBox="0 0 28 32" className="mr-px h-8 w-7">
            <path d="M12 1.500 1.500 6v8.500C1.500 20.800 6 26 12 28z" fill="#5d6165" />
            <path d="M12 2.800 22.300 7v8" fill="none" stroke="#5d6165" strokeWidth="2.300" />
            <rect x="12.800" y="17.200" width="14" height="14" rx="1.800" fill="#dc4437" />
            <path d="m17 21.200 5.600 6m0-6-5.600 6" stroke="#fff" strokeWidth="2" />
          </svg>
          <svg viewBox="0 0 28 28" className="ml-[32px] h-7 w-7" fill="none" stroke="#5d6165" strokeWidth="2.200">
            <circle cx="12" cy="12" r="10" />
            <path d="M7.500 12h9M19.200 19.200l7.300 7.300" />
          </svg>
          <span className="ml-[18px] h-8 w-[2px] bg-[#b4b8bc]" />
          <SiBrave className="ml-[18px] h-[37px] w-[37px] text-[#fb542b]" />
        </div>
      </div>
      <svg viewBox="0 0 40 40" className="ml-[260px] h-10 w-10">
        <circle cx="20" cy="20" r="20" fill="#dedede" />
        <ellipse cx="20" cy="12" rx="6.200" ry="6.200" fill="#9d9d9d" />
        <path d="M8 27.500c0-7 24-7 24 0-2 4-6.500 6.800-12 6.800S10 31.500 8 27.500z" fill="#9d9d9d" />
      </svg>
      <div className="ml-[35px] flex flex-col gap-2">
        <span className="h-[3px] w-[18px] rounded-full bg-[#3d3f42]" />
        <span className="h-[3px] w-[18px] rounded-full bg-[#3d3f42]" />
        <span className="h-[3px] w-[18px] rounded-full bg-[#3d3f42]" />
      </div>
    </div>
  );
}

export default function App() {
  return (
    <div className="h-[1778px] w-[2700px] overflow-hidden bg-white pl-[112px] pt-[76px]">
      <div className="h-[1554px] w-[2476px] rounded-[10px] shadow-[0_0_0_1px_rgba(0,0,0,0.24),0_36px_76px_rgba(0,0,0,0.46),0_0_50px_rgba(0,0,0,0.1)]">
        <div className="flex h-full flex-col overflow-hidden rounded-[10px] bg-white">
          <TabStrip />
          <Toolbar />
          <div className="h-[6px] shrink-0 bg-linear-to-r from-[#1c5f93] to-[#219a5c]" />
          <main className="ml-[490px] w-[1496px] pt-[63px] font-['Noto_Sans','Open_Sans',sans-serif] text-[#5f6b74]">
            <h1 className="ml-[-1px] whitespace-nowrap text-[64.8px] leading-[80px] tracking-[-0.9px] text-[#219a5c]">Interactive Waterlevel Viewer</h1>
            <p className="ml-[-1px] mt-[37px] whitespace-nowrap text-[31.5px] leading-[48px]">
              this is a project to learn about possibilities for interactive raster visualisation
            </p>
            <div className="relative mt-[32px] h-[990px] w-[1496px] overflow-hidden">
              <TerrainMap />
              <div className="absolute left-[18px] top-[18px]">
                <ZoomControl />
              </div>
              <div className="absolute right-[18px] top-[18px] flex flex-col items-end gap-[18px]">
                <LayersControl />
                <Legend />
              </div>
              <div className="absolute bottom-0 right-0 flex h-7 w-[718px] items-center justify-center whitespace-pre bg-white/70 font-['Liberation_Sans',Arial,sans-serif] text-[19.8px] text-[#333]">
                <span className="text-[#0078a8]">Leaflet</span> | Basemap tiles: Mapbox emerald, <span className="text-[#0078a8]">Terms &amp; Feedback</span>, DEM: SRTM data
              </div>
            </div>
            <div className="ml-[-1px] mt-[3px] flex h-12 items-baseline whitespace-nowrap text-[31.5px] leading-[48px]">
              <span>Show waterlevel at</span>
              <span className="ml-[28px] text-[36px] text-[#6f975f]">713</span>
              <span className="ml-[11px]">m</span>
            </div>
            <div className="mt-[23px] flex h-[42px] items-center">
              <div className="relative mt-[6px] h-7 w-full rounded-[6px] border-2 border-[#a9a9a9] bg-white">
                <div className="absolute left-[334px] top-[-12px] h-[42px] w-[40px] rounded-[6px] border-2 border-[#d0d0d0] bg-linear-to-b from-[#ebebeb] from-50% via-[#e2e2e2] via-52% to-[#eaeaea]" />
              </div>
            </div>
          </main>
        </div>
      </div>
    </div>
  );
}
